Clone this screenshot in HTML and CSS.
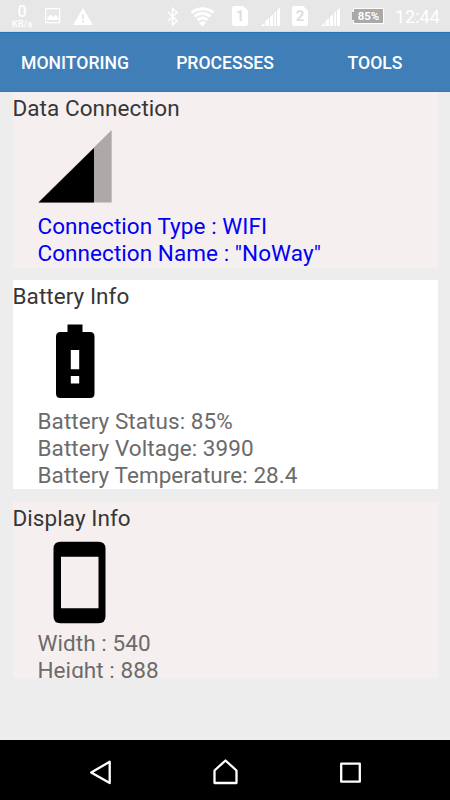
FILE: index.html
```html
<!DOCTYPE html>
<html lang="en">
<head>
<meta charset="utf-8">
<title>Device Monitor</title>
<link rel="stylesheet" href="styles.css">
</head>
<body>
<div class="screen">
  <header class="status">
    <div class="speed"><b>0</b><small>KB/s</small></div>
    <svg class="picture" width="16" height="16" viewBox="0 0 16 16"><path fill="none" stroke="currentColor" stroke-width="1.2" d="M.7.7h14v14H.7z"/><path fill="currentColor" d="M2.5 12V9l3-2 3 2 2-2.200 3 3V12z"/></svg>
    <svg class="warning" width="20" height="17" viewBox="0 0 20 17"><path fill="currentColor" fill-rule="evenodd" d="M10 0l10 17H0zM9 6v5h2V6zm0 6.500v2h2v-2z"/></svg>
    <svg class="bluetooth" width="12" height="19" viewBox="0 0 12 19"><path fill="none" stroke="currentColor" stroke-width="1.500" d="M1 5l9 9-4.500 4V1.500L10 5.500 1 14"/></svg>
    <svg class="wifi" width="25" height="20" viewBox="0 0 25 20"><g fill="none" stroke="currentColor" stroke-width="3"><path d="M1.500 5.500Q12.500-2 23.500 5.500"/><path d="M4.500 9.300Q12.500 3.500 20.500 9.300"/><path d="M7.500 13Q12.500 9 17.500 13"/></g><path fill="currentColor" d="M9 15.500q3.500-2.500 7 0L12.500 20z"/></svg>
    <span class="sim sim-one">1</span>
    <svg class="bars" width="19" height="19" viewBox="0 0 19 19"><path fill="currentColor" d="M0 19l3.500-3.500V19zM4.500 19v-5L8 11v8zM9 19v-9l3-2.500V19zM13.200 19V6l1.800-1.500V19zM16 19V3.500L19 .5V19z"/></svg>
    <span class="sim sim-two">2</span>
    <svg class="bars" width="19" height="19" viewBox="0 0 19 19"><path fill="currentColor" d="M0 19l3.500-3.500V19zM4.500 19v-5L8 11v8zM9 19v-9l3-2.500V19zM13.200 19V6l1.800-1.500V19zM16 19V3.500L19 .5V19z"/></svg>
    <span class="charge">85%</span>
    <time class="clock">12:44</time>
  </header>
  <nav class="tabs"><a>MONITORING</a><a>PROCESSES</a><a>TOOLS</a></nav>
  <main class="content">
    <section class="card card-data">
      <h2>Data Connection</h2>
      <svg class="picto" width="110" height="91.500" viewBox="13 121.500 110 91.500"><path fill="#aea8a8" d="M111.700 130.500v72.500H38z"/><path fill="#000" d="M94 148.500V203H38.500z"/></svg>
      <p class="link">Connection Type : WIFI</p>
      <p class="link">Connection Name : "NoWay"</p>
    </section>
    <section class="card card-battery">
      <h2>Battery Info</h2>
      <svg class="picto" width="110" height="98" viewBox="13 310 110 98"><path fill-rule="evenodd" d="M67.500 324.500h15v7.500h7.500q4.500 0 4.500 4.500v57q0 4.500-4.500 4.500H60.500q-4.500 0-4.500-4.500v-57q0-4.500 4.500-4.500h7zM70.800 350v19.300h8.400V350zM70.800 376v7.500h8.400V376z"/></svg>
      <p>Battery Status: 85%</p>
      <p>Battery Voltage: 3990</p>
      <p>Battery Temperature: 28.4</p>
    </section>
    <section class="card card-display">
      <h2>Display Info</h2>
      <svg class="picto" width="110" height="98" viewBox="13 531.300 110 98"><path fill-rule="evenodd" d="M60.500 542h38q7 0 7 7v67.500q0 7-7 7h-38q-7 0-7-7V549q0-7 7-7zM61 557v51.500h37.500V557z"/></svg>
      <p>Width : 540</p>
      <p>Height : 888</p>
    </section>
  </main>
  <footer class="navbar">
    <svg width="450" height="60" viewBox="0 740 450 60"><g fill="none" stroke="#fff" stroke-width="2.300" stroke-linejoin="round"><path d="M109.700 761.800v21.300l-18.500-10.600z"/><path d="M225.500 760.500l11 10V783h-22v-12.500z"/><path d="M341.200 763.700h18.600v18h-18.600z"/></g></svg>
  </footer>
</div>
</body>
</html>
```
FILE: styles.css
```css
* { box-sizing: border-box; }
body { margin: 0; font-family: Roboto, sans-serif; background: #ededed; }
.screen { width: 450px; height: 800px; display: flex; flex-direction: column; overflow: hidden; }
svg { display: block; flex: none; }

.status {
  height: 32px;
  flex: none;
  display: flex;
  align-items: flex-start;
  padding: 0 10px 0 11px;
  background: #e7e7e7;
  border-bottom: 1px solid #d3dce4;
  color: #fff;
}
.speed { width: 22px; padding-top: 4px; text-align: center; }
.speed b { display: block; font-size: 16px; line-height: 15px; font-weight: 500; }
.speed small { display: block; font-size: 9.5px; line-height: 9px; font-weight: 500; }
.picture { margin: 8px 0 0 12px; }
.warning { margin: 8px 0 0 12px; }
.bluetooth { margin: 7px 0 0 74px; }
.wifi { margin: 7px 0 0 11px; }
.sim {
  width: 16px;
  height: 20px;
  margin-top: 6px;
  border-radius: 2px;
  background: #fff;
  clip-path: polygon(0 0, 70% 0, 100% 22%, 100% 100%, 0 100%);
  color: #dedede;
  font-size: 15px;
  line-height: 21px;
  font-weight: 700;
  text-align: center;
}
.sim-one { margin-left: 17px; }
.sim-two { margin-left: 11px; }
.bars { margin: 7px 0 0 13px; }
.sim-two { margin-left: 12px; }
.charge {
  position: relative;
  width: 31px;
  height: 16px;
  margin: 8px 0 0 13px;
  border: 1px solid #fff;
  background: #a9a9a9;
  font-size: 11.5px;
  line-height: 15px;
  font-weight: 700;
  text-align: center;
}
.charge::before { content: ""; position: absolute; left: -2px; top: 3px; width: 2px; height: 8px; background: #a9a9a9; }
.clock { margin: 5px 0 0 11px; font-size: 18px; line-height: 23px; font-weight: 400; white-space: nowrap; }

.tabs {
  height: 59.5px;
  flex: none;
  display: grid;
  grid-template-columns: repeat(3, 1fr);
  align-items: center;
  background: #407eb7;
  border-top: 1px solid #2275b8;
  border-bottom: 1px solid #3079bd;
  color: #fff;
  font-size: 17.6px;
  font-weight: 500;
  text-align: center;
}
.tabs a { padding-top: 2px; }

.content { flex: 1; display: flex; flex-direction: column; gap: 12.5px; padding: 0 12.500px; }
.card { flex: none; padding-top: 3.200px; overflow: hidden; background: #f5efef; }
.card-data { height: 176px; }
.card-battery { height: 209px; background: #fff; }
.card-display { height: 176px; }
.card h2 { margin: 0; color: #363636; font-size: 22.500px; line-height: 26.670px; font-weight: 400; letter-spacing: .06px; }
.card p { margin: 0 0 0 25px; color: #6c6b6b; font-size: 22.500px; line-height: 26.670px; letter-spacing: .06px; }
.card .link { color: #0000f5; }
.card-battery .picto, .card-display .picto { margin-bottom: .6px; }

.navbar { height: 60px; flex: none; background: #000; }
```
